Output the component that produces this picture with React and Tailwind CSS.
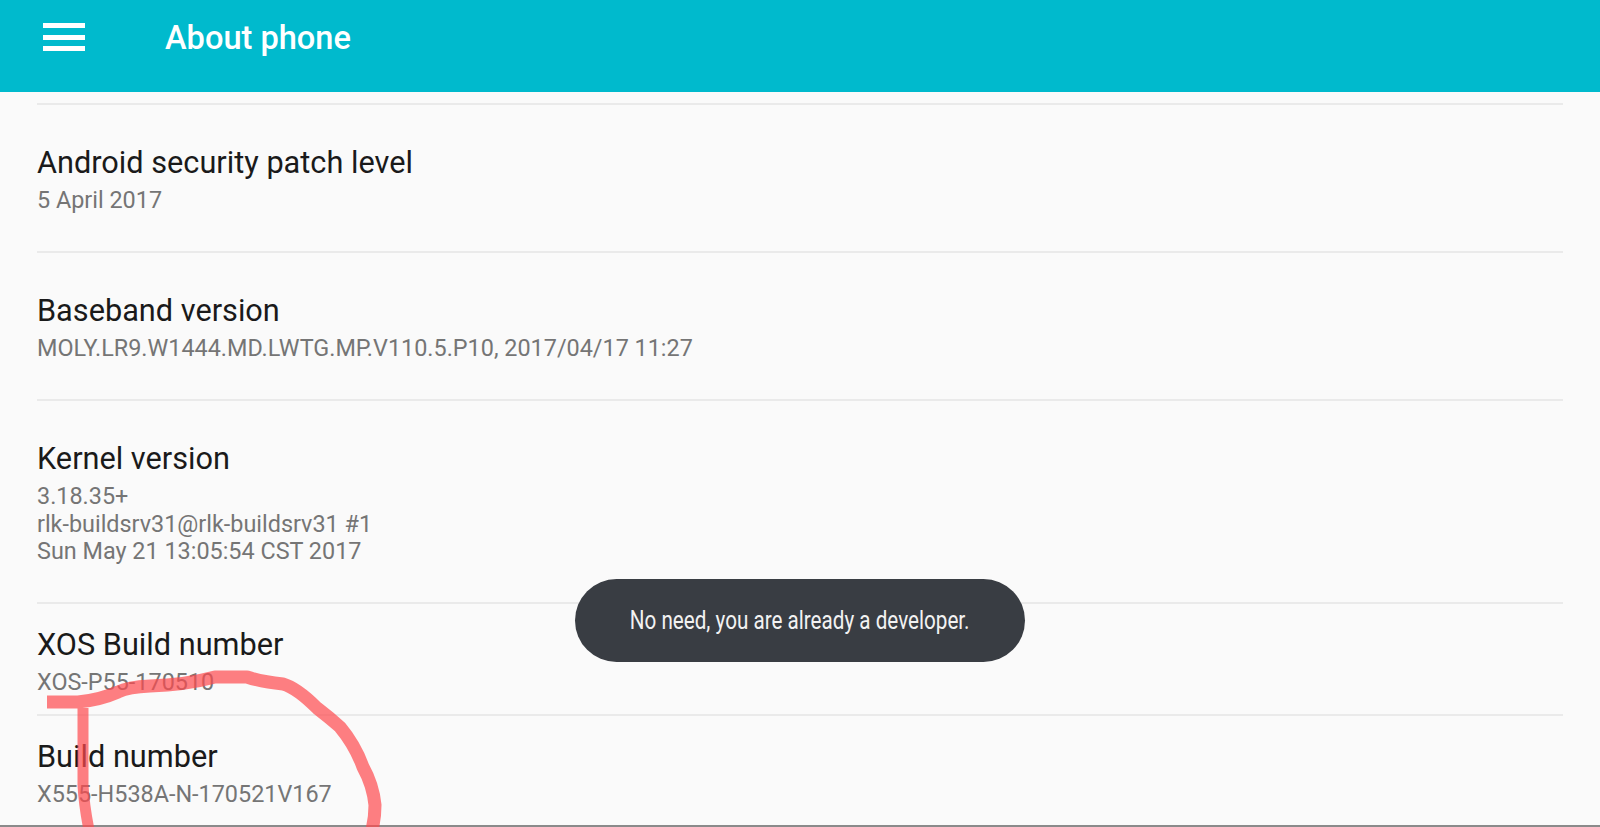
import React from "react";

const Row = ({ title, lines, height }) => (
  <div className={`border-t-[2px] border-[#eaeaea] flex flex-col pt-[39px] ${height}`}>
    <div className="text-[30.7px] leading-[38px] text-[#1a1a1a]">{title}</div>
    <div className="mt-[5px] flex flex-col">
      {lines.map((line) => (
        <div key={line} className="text-[23.4px] leading-[27.5px] text-[#757575]">
          {line}
        </div>
      ))}
    </div>
  </div>
);

const App = () => {
  return (
    <div className="relative h-[827px] w-[1600px] overflow-hidden bg-[#fafafa] font-['Roboto',sans-serif]">
      <header className="flex h-[92px] items-start bg-[#00bacd] text-white">
        <div className="ml-[43px] mt-[23px] flex w-[42px] flex-col gap-[6.5px]">
          <div className="h-[5px] bg-white"></div>
          <div className="h-[5px] bg-white"></div>
          <div className="h-[5px] bg-white"></div>
        </div>
        <h1 className="ml-[80px] mt-[18px] text-[32.6px] leading-[40px] font-medium">About phone</h1>
      </header>

      <div className="flex h-[735px] flex-col border-b-[2px] border-[#8a8a8a] px-[37px] pt-[11px]">
        <Row title="Android security patch level" lines={["5 April 2017"]} height="h-[148px]" />
        <Row
          title="Baseband version"
          lines={["MOLY.LR9.W1444.MD.LWTG.MP.V110.5.P10, 2017/04/17 11:27"]}
          height="h-[148px]"
        />
        <Row
          title="Kernel version"
          lines={["3.18.35+", "rlk-buildsrv31@rlk-buildsrv31 #1", "Sun May 21 13:05:54 CST 2017"]}
          height="h-[203px]"
        />
        <Row title="XOS Build number" lines={["XOS-P55-170510"]} height="h-[112px] !pt-[22px]" />
        <Row title="Build number" lines={["X555-H538A-N-170521V167"]} height="h-[111px] !pt-[22px]" />
      </div>

      {/* toast */}
      <div className="absolute left-[575px] top-[579px] flex h-[83px] w-[450px] items-center justify-center rounded-[42px] bg-[#393d43]">
        <span className="scale-x-[0.826] whitespace-nowrap text-[25px] text-[#f2f2f2]">
          No need, you are already a developer.
        </span>
      </div>

      {/* red marker scribble */}
      <svg className="absolute left-0 top-0 opacity-70" width="1600" height="827" viewBox="0 0 1600 827" fill="none">
        <path
          d="M47 702 L78 702 Q100 700 118 692 Q128 687 150 686 Q185 685 215 677 L247 677 Q262 682 283 684 Q297 688 317 708 Q330 718 340 727 Q355 745 363 767 Q373 785 375 805 Q375 818 372 830"
          stroke="#ff4a4e"
          strokeWidth="13"
          strokeLinejoin="round"
        />
        <path d="M83 708 L83 785 Q84 805 89 830" stroke="#ff4a4e" strokeWidth="11" />
      </svg>
    </div>
  );
};

export default App;
